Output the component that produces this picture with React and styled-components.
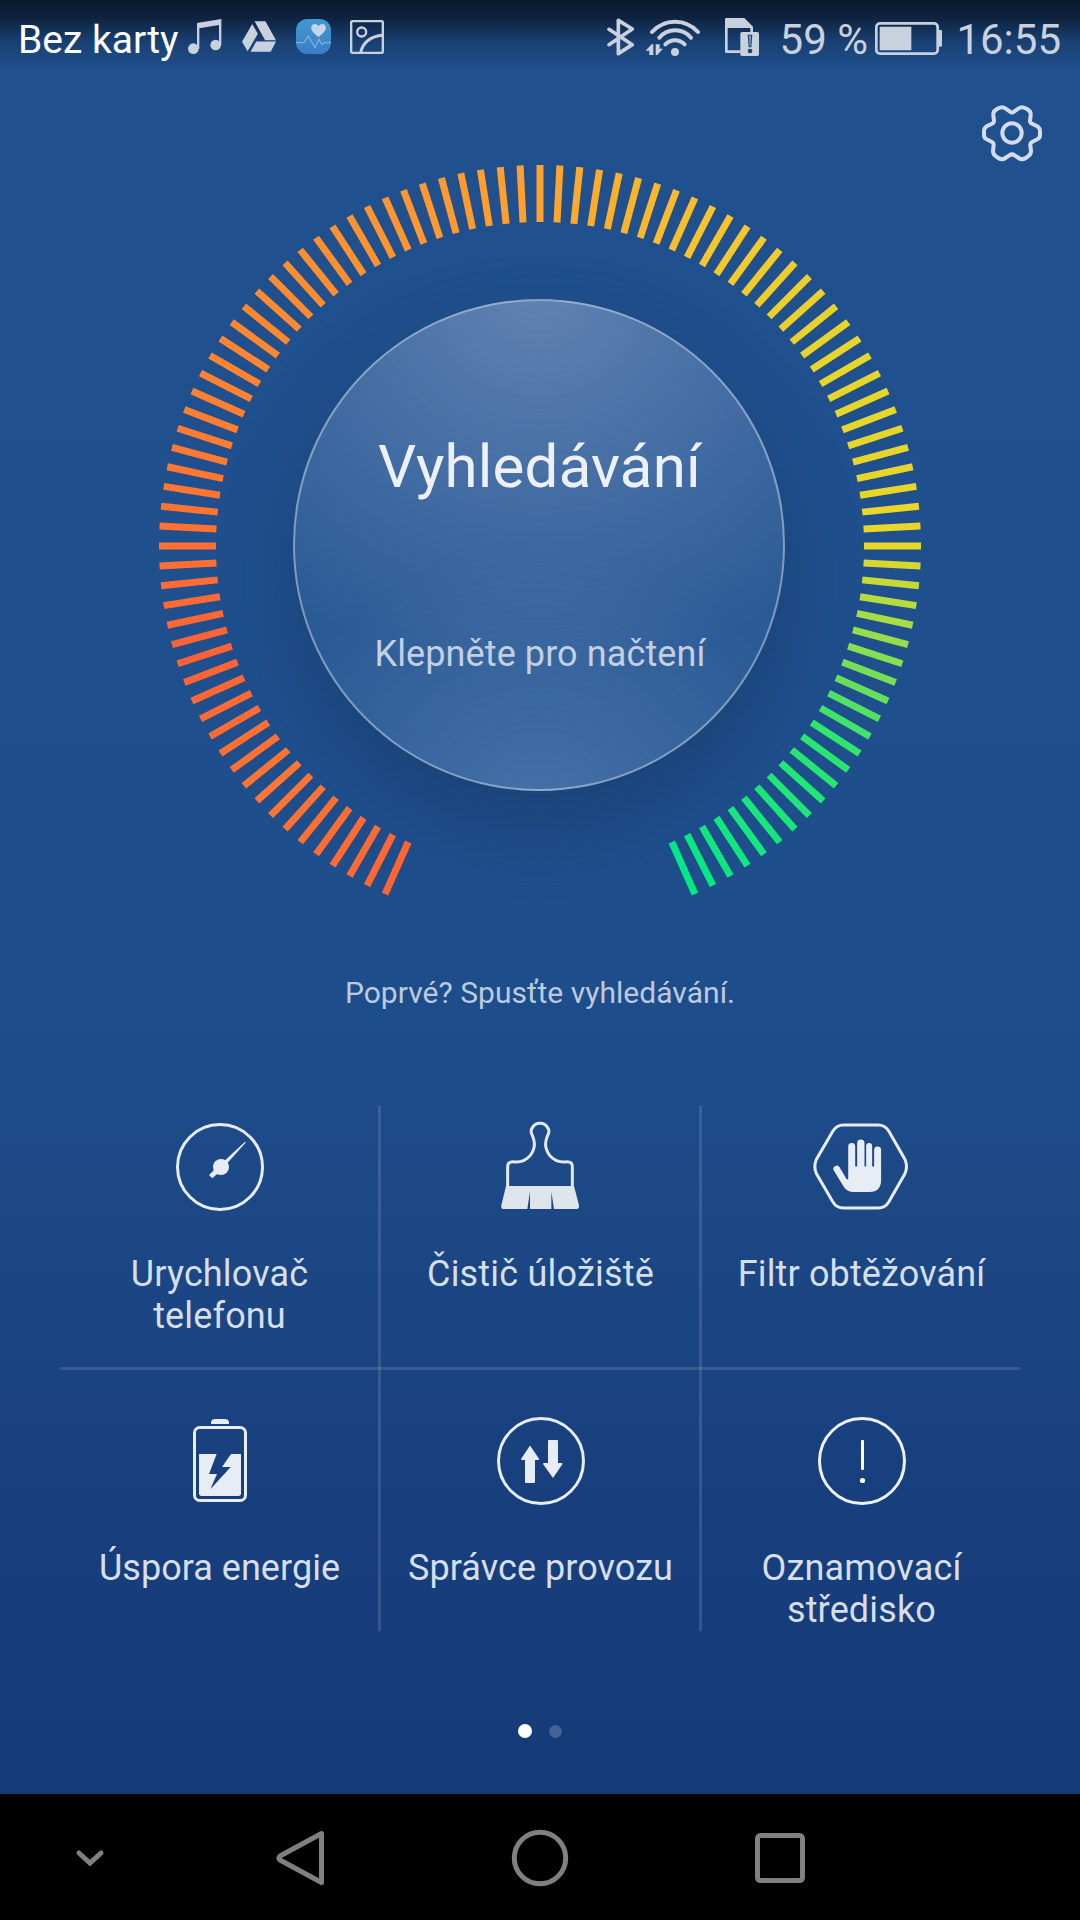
import React from "react";
import styled, { createGlobalStyle } from "styled-components";

const GlobalStyle = createGlobalStyle`
  *, *::before, *::after { box-sizing: border-box; }
  html, body { margin: 0; padding: 0; background: #000; }
  body { font-family: Roboto, "Noto Sans", sans-serif; }
  svg { display: block; flex: none; overflow: visible; }
`;

const Screen = styled.div`
  width: 1080px;
  height: 1920px;
  display: flex;
  flex-direction: column;
  overflow: hidden;
`;

const Home = styled.main`
  height: 1794px;
  display: flex;
  flex-direction: column;
  align-items: center;
  background: linear-gradient(
    #20508d 0,
    #1f4f8d 600px,
    #1e4d8b 1000px,
    #1b4583 1300px,
    #183f7d 1500px,
    #153a78 1794px
  );
`;

const StatusBar = styled.header`
  width: 100%;
  height: 75px;
  flex: none;
  display: flex;
  justify-content: space-between;
  padding: 18px 19px 0 18px;
  background: linear-gradient(#0a182d 0, #0f2340 18px, rgba(24, 62, 112, 0.9) 42px, rgba(32, 80, 141, 0) 70px);
`;

const StatusGroup = styled.div`
  display: flex;
  align-items: flex-start;
  color: #c8d1dd;
`;

const StatusText = styled.span`
  width: ${(p) => p.$width}px;
  margin-top: 1px;
  font-size: ${(p) => p.$size}px;
  line-height: 42px;
  color: ${(p) => p.$color || "inherit"};
  white-space: nowrap;
  display: flex;
  justify-content: ${(p) => (p.$align === "right" ? "flex-end" : "flex-start")};
`;

const StatusIcon = styled.svg`
  margin: ${(p) => p.$top || 0}px 0 0 ${(p) => p.$left || 0}px;
`;

const Toolbar = styled.div`
  width: 100%;
  height: 90px;
  flex: none;
  display: flex;
  justify-content: flex-end;
  padding: 27px 37px 0 0;
`;

const SettingsButton = styled.button`
  width: 62px;
  height: 62px;
  padding: 0;
  border: 0;
  background: none;
  display: flex;
  align-items: center;
  justify-content: center;
`;

const Dial = styled.section`
  width: 762px;
  height: 762px;
  flex: none;
  display: grid;
  place-items: center;
  > * { grid-area: 1 / 1; }
`;

const ScanButton = styled.button`
  width: 492px;
  height: 492px;
  margin: 0 2px 2px 0;
  padding: 131px 0 0 2px;
  border: 2px solid rgba(205, 217, 236, 0.5);
  border-radius: 50%;
  display: flex;
  flex-direction: column;
  align-items: center;
  font-family: inherit;
  background:
    radial-gradient(circle 400px at 50% -4%, rgba(132, 156, 194, 0.62), rgba(106, 138, 186, 0.42) 50%, rgba(90, 130, 180, 0) 100%),
    radial-gradient(circle 280px at 50% 108%, rgba(110, 145, 195, 0.42), rgba(90, 130, 180, 0) 100%),
    #2b5b95;
  box-shadow: 0 34px 66px rgba(22, 58, 100, 0.5);
`;

const ScanTitle = styled.span`
  margin-right: 1px;
  font-size: 60px;
  line-height: 70px;
  letter-spacing: 0.2px;
  color: #edf0f8;
`;

const ScanHint = styled.span`
  margin-top: 131px;
  font-size: 36px;
  line-height: 42px;
  letter-spacing: 0.1px;
  color: #c4d0e2;
`;

const Notice = styled.p`
  margin: 48px 0 0;
  font-size: 30px;
  line-height: 36px;
  height: 131px;
  letter-spacing: 0.03px;
  color: #bccadf;
`;

const Features = styled.section`
  width: 960px;
  height: 525px;
  flex: none;
  display: grid;
  grid-template-columns: 318px 3px 318px 3px 318px;
  grid-template-rows: 261px 3px 261px;
`;

const Rule = styled.i`
  grid-area: ${(p) => p.$area};
  background: rgba(255, 255, 255, 0.13);
`;

const Feature = styled.div`
  grid-column: ${(p) => p.$col};
  grid-row: ${(p) => p.$row};
  display: flex;
  flex-direction: column;
  align-items: center;
  padding: ${(p) => (p.$row === 1 ? 17 : 47)}px 19px 0 20px;
`;

const FeatureIcon = styled.div`
  height: 92px;
  flex: none;
  padding-top: ${(p) => p.$drop || 0}px;
  color: #e7ecf5;
`;

const FeatureLabel = styled.span`
  margin-top: 38px;
  font-size: 36px;
  line-height: 42px;
  letter-spacing: ${(p) => p.$tracking}px;
  text-align: center;
  color: #d6deea;
`;

const Pager = styled.div`
  display: flex;
  align-items: center;
  gap: 17px;
  margin: 93px 0 0;
`;

const Dot = styled.i`
  width: ${(p) => (p.$active ? 14 : 13)}px;
  height: ${(p) => (p.$active ? 14 : 13)}px;
  border-radius: 50%;
  background: ${(p) => (p.$active ? "#fff" : "rgba(255, 255, 255, 0.2)")};
`;

const NavBar = styled.nav`
  height: 126px;
  flex: none;
  display: flex;
  align-items: center;
  padding: 2px 0 0 76px;
  background: #000;
  color: #808080;
`;

const NavKey = styled.div`
  width: ${(p) => p.$width}px;
  margin-right: ${(p) => p.$gap}px;
`;

/* Colour stops round the dial, by degrees clockwise from the top. */
const STOPS = [
  [-156, [255, 100, 50]],
  [-132, [255, 118, 50]],
  [-108, [253, 98, 53]],
  [-90, [255, 112, 50]],
  [-60, [255, 132, 48]],
  [-30, [255, 146, 46]],
  [0, [255, 161, 45]],
  [15, [250, 180, 44]],
  [30, [247, 197, 43]],
  [45, [236, 207, 43]],
  [60, [230, 214, 43]],
  [90, [232, 214, 40]],
  [99, [182, 219, 62]],
  [108, [136, 221, 80]],
  [117, [84, 224, 100]],
  [124, [42, 230, 112]],
  [135, [30, 231, 120]],
  [156, [5, 231, 132]],
];

function colourAt(deg) {
  for (let i = 1; i < STOPS.length; i++) {
    const [a, from] = STOPS[i - 1];
    const [b, to] = STOPS[i];
    if (deg <= b) {
      const t = (deg - a) / (b - a);
      return `rgb(${from.map((v, k) => Math.round(v + (to[k] - v) * t)).join(",")})`;
    }
  }
  return "rgb(5,231,132)";
}

const TICKS = Array.from({ length: 105 }, (_, i) => -156 + i * 3);

const Ticks = () => (
  <svg width="762" height="762" viewBox="-381 -381 762 762">
    {TICKS.map((deg) => (
      <line key={deg} y1="-381" y2="-324" stroke={colourAt(deg)} strokeWidth="7" transform={`rotate(${deg})`} />
    ))}
  </svg>
);

const MusicIcon = () => (
  <StatusIcon width="34" height="35" $top={1} viewBox="564 57 102 105" fill="currentColor">
    <circle cx="580" cy="146" r="16" />
    <circle cx="647" cy="135" r="16" />
    <path d="M591 69L664 57V136H657V75L598 85V146H591Z" />
  </StatusIcon>
);

const DriveIcon = () => (
  <StatusIcon $left={20} $top={3} width="34" height="31" viewBox="725 63 103 92" fill="currentColor">
    <path d="M756 71L773 101L742 154L725 125ZM763 63H796L828 120H795ZM768 124H828L812 155H751Z" />
  </StatusIcon>
);

const HealthIcon = () => (
  <StatusIcon $left={19.5} $top={1} width="35" height="35" viewBox="0 0 35 35">
    <defs>
      <linearGradient id="health" x1="0" y1="0" x2="0" y2="1">
        <stop offset="0" stopColor="#3f9bd0" />
        <stop offset="1" stopColor="#3d7cc6" />
      </linearGradient>
    </defs>
    <rect width="35" height="35" rx="11.5" fill="url(#health)" />
    <path d="M22.5 18C18 14.5 15.2 12 15.2 8.8C15.2 4.6 20.3 3.6 22.5 7.2C24.7 3.6 29.8 4.6 29.8 8.8C29.8 12 27 14.5 22.5 18Z" fill="#c6d6e4" />
    <path d="M0 23.7H8L12.3 17L19 28.5L23 20.3L26 25.7L28.5 23.7H35" fill="none" stroke="#7db4dc" strokeWidth="1.2" />
  </StatusIcon>
);

const PictureIcon = () => (
  <StatusIcon $left={19.5} $top={2} width="34" height="34" viewBox="1050 60 102 102" fill="none" stroke="currentColor">
    <rect x="1053.5" y="63.5" width="95" height="95" rx="4" strokeWidth="7" />
    <circle cx="1085" cy="96" r="13.5" strokeWidth="7" />
    <path d="M1082 158C1088 128 1112 108 1149 106" strokeWidth="9" />
  </StatusIcon>
);

const BluetoothIcon = () => (
  <StatusIcon width="28" height="38" viewBox="50 54 84 114" fill="none" stroke="currentColor" strokeWidth="11" strokeLinejoin="round" strokeLinecap="round">
    <path d="M56 88L126 134L84 161V61L126 87L56 134" />
  </StatusIcon>
);

const WifiIcon = () => (
  <StatusIcon $left={11} $top={1} width="54" height="37" viewBox="168 57 162 111" fill="none" stroke="currentColor" strokeWidth="12" strokeLinecap="round">
    <path d="M186 96A92.6 92.6 0 0 1 324 96M208 113A62 62 0 0 1 303 113M226 133A40 40 0 0 1 284 133" />
    <g fill="currentColor" stroke="none">
      <circle cx="255" cy="156" r="12" />
      <path d="M168 151L185 133H190V165H178V152H168ZM197 133H209V146H219L202 165H197Z" />
    </g>
  </StatusIcon>
);

const SimIcon = () => (
  <StatusIcon $left={25} width="34" height="38" viewBox="405 54 102 114" fill="currentColor">
    <path d="M409 54H463L489 80V98H481V84H413V151H452V159H409Q405 159 405 155V58Q405 54 409 54Z" />
    <rect x="451" y="96" width="56" height="72" rx="5" />
    <path d="M473 104H487L484 142H476Z" fill="#1c4378" />
    <path d="M478 107H482L481 137H479Z" />
    <circle cx="480" cy="153" r="7" fill="#1c4378" />
  </StatusIcon>
);

const BatteryIcon = () => (
  <StatusIcon $left={7} $top={4} width="67" height="33" viewBox="855 66 201 99">
    <rect x="859" y="70" width="184" height="91" rx="11" fill="none" stroke="currentColor" strokeWidth="8" />
    <path d="M869 80H964V151H869ZM1046 90H1053Q1056 90 1056 94V136Q1056 140 1053 140H1046Z" fill="currentColor" />
  </StatusIcon>
);

const GearIcon = () => (
  <svg width="60" height="58" viewBox="-90 -87 180 174" fill="none" stroke="#d3dcec" strokeWidth="12" strokeLinejoin="round">
    <path d="M6 -64L20 -74Q30 -81 41 -74L48 -70Q57 -65 56 -54L54 -37Q54 -31 60 -28L76 -20Q84 -15 84 -6V6Q84 15 76 19L60 27Q54 31 55 37L57 54Q57 65 48 70L41 75Q30 82 20 75L8 67Q0 61 -8 67L-20 75Q-30 82 -41 75L-48 70Q-57 65 -57 54L-55 37Q-54 31 -60 27L-76 19Q-84 15 -84 6V-6Q-84 -15 -76 -20L-60 -28Q-54 -31 -54 -37L-56 -54Q-57 -65 -48 -70L-41 -74Q-30 -81 -20 -74L-6 -64Q0 -59 6 -64Z" />
    <circle r="29" />
  </svg>
);

const GaugeIcon = () => (
  <svg width="88" height="88" viewBox="0 0 88 88" fill="currentColor">
    <circle cx="44" cy="44" r="42.5" fill="none" stroke="currentColor" strokeWidth="3" />
    <circle cx="45" cy="44" r="8" />
    <path d="M43.5 42.5L69 18.8L69.8 19.6L46.5 45.5ZM43 42L47 46L36.3 55.3L33 52Z" />
  </svg>
);

const BrushIcon = () => (
  <svg width="78" height="87" viewBox="366 99 234 261">
    <path
      d="M383 291V230Q383 217 394 216Q399 215 405 216Q434 217 451 196Q472 168 457 136Q450 124 456 115A26.5 26.5 0 0 1 504 115Q510 124 503 136Q488 168 509 196Q526 217 555 216Q561 215 566 216Q577 217 577 230V291"
      fill="none"
      stroke="#e2e9f1"
      strokeWidth="9"
    />
    <path d="M378 288H582L597 346Q598 357 590 357H522L514 305V357H450V305L442 357H372Q362 357 364 346Z" fill="#dde5ed" />
  </svg>
);

const HandIcon = () => (
  <svg width="95" height="87" viewBox="341 98 286 260" fill="currentColor">
    <path
      d="M430 103H534Q555 103 566 121L615 207Q624 228 615 249L566 335Q555 353 534 353H430Q409 353 398 335L348 249Q339 228 348 207L398 121Q409 103 430 103Z"
      fill="none"
      stroke="currentColor"
      strokeWidth="9"
    />
    <path d="M444 168A10.5 10.5 0 0 1 465 168V228H471V158A11 11 0 0 1 493 158V228H498V166A9 9 0 0 1 516 166V228H522V178A10.5 10.5 0 0 1 543 178V269Q543 305 508 305H460Q441 305 431 290L401 241A10 10 0 0 1 418 230L438 264Q442 269 444 266Z" />
  </svg>
);

const SaverIcon = () => (
  <svg width="54" height="83" viewBox="429 117 162 249" fill="currentColor">
    <path d="M483 132V127Q485 117 495 117H525Q535 117 537 127V132Z" />
    <rect x="433.5" y="142.5" width="153" height="219" rx="16" fill="none" stroke="currentColor" strokeWidth="9" />
    <path d="M447 222H500L477 282H501L481 328L542 261H516L543 222H573V340Q573 348 565 348H455Q447 348 447 340Z" />
  </svg>
);

const TrafficIcon = () => (
  <svg width="88" height="88" viewBox="0 0 88 88" fill="currentColor">
    <circle cx="44" cy="44" r="42.5" fill="none" stroke="currentColor" strokeWidth="3" />
    <path d="M33 28.5L42.2 42Q42 43 41 43H38V65Q38 66 37 66H29Q28 66 28 65V43H25Q24 43 24 42Z" />
    <path d="M52 23H60Q61 23 61 24V46H64.5Q65.5 46 65.5 47L56 61L46 47Q46 46 47 46H51V24Q51 23 52 23Z" />
  </svg>
);

const AlertIcon = () => (
  <svg width="88" height="88" viewBox="0 0 88 88" fill="#fff">
    <circle cx="44" cy="44" r="42.5" fill="none" stroke="#eef1f8" strokeWidth="3" />
    <rect x="43" y="23" width="3" height="30" rx="1" />
    <circle cx="44.5" cy="63.5" r="2.6" />
  </svg>
);

const FEATURES = [
  { label: "Urychlovač telefonu", Icon: GaugeIcon, col: 1, row: 1, tracking: 0.15 },
  { label: "Čistič úložiště", Icon: BrushIcon, col: 3, row: 1, tracking: 0.2 },
  { label: "Filtr obtěžování", Icon: HandIcon, col: 5, row: 1, tracking: 0.13 },
  { label: "Úspora energie", Icon: SaverIcon, col: 1, row: 3, drop: 2, tracking: 0.03 },
  { label: "Správce provozu", Icon: TrafficIcon, col: 3, row: 3, tracking: 0.07 },
  { label: "Oznamovací středisko", Icon: AlertIcon, col: 5, row: 3, tracking: 0.15 },
];

export default function App() {
  return (
    <>
      <GlobalStyle />
      <Screen>
        <Home>
          <StatusBar>
            <StatusGroup>
              <StatusText $width={170} $size={39} $color="#fff">Bez karty</StatusText>
              <MusicIcon />
              <DriveIcon />
              <HealthIcon />
              <PictureIcon />
            </StatusGroup>
            <StatusGroup>
              <BluetoothIcon />
              <WifiIcon />
              <SimIcon />
              <StatusText $width={109} $size={42} $align="right">59 %</StatusText>
              <BatteryIcon />
              <StatusText $width={119} $size={42} $align="right">16:55</StatusText>
            </StatusGroup>
          </StatusBar>

          <Toolbar>
            <SettingsButton aria-label="Nastavení">
              <GearIcon />
            </SettingsButton>
          </Toolbar>

          <Dial>
            <ScanButton>
              <ScanTitle>Vyhledávání</ScanTitle>
              <ScanHint>Klepněte pro načtení</ScanHint>
            </ScanButton>
            <Ticks />
          </Dial>

          <Notice>Poprvé? Spusťte vyhledávání.</Notice>

          <Features>
            <Rule $area="1 / 2 / 4 / 3" />
            <Rule $area="1 / 4 / 4 / 5" />
            <Rule $area="2 / 1 / 3 / 6" />
            {FEATURES.map(({ label, Icon, col, row, drop, tracking }) => (
              <Feature key={label} $col={col} $row={row}>
                <FeatureIcon $drop={drop}>
                  <Icon />
                </FeatureIcon>
                <FeatureLabel $tracking={tracking}>{label}</FeatureLabel>
              </Feature>
            ))}
          </Features>

          <Pager>
            <Dot $active />
            <Dot />
          </Pager>
        </Home>

        <NavBar>
          <NavKey $width={28} $gap={171}>
            <svg width="28" height="17" viewBox="0 0 28 17" fill="none" stroke="currentColor" strokeWidth="5">
              <path d="M3 3L14 13L25 3" strokeLinecap="round" />
            </svg>
          </NavKey>
          <NavKey $width={50} $gap={186}>
            <svg width="50" height="56" viewBox="0 0 50 56" fill="none" stroke="currentColor" strokeWidth="5" strokeLinejoin="round">
              <path d="M46.5 3.5V52.5L5 30Q3 28 5 26Z" />
            </svg>
          </NavKey>
          <NavKey $width={58} $gap={186}>
            <svg width="58" height="58" viewBox="0 0 58 58" fill="none" stroke="currentColor" strokeWidth="5">
              <circle cx="29" cy="29" r="25.7" />
            </svg>
          </NavKey>
          <NavKey $width={50} $gap={0}>
            <svg width="50" height="50" viewBox="0 0 50 50" fill="none" stroke="currentColor" strokeWidth="5">
              <rect x="2.5" y="2.5" width="45" height="45" rx="3" />
            </svg>
          </NavKey>
        </NavBar>
      </Screen>
    </>
  );
}
